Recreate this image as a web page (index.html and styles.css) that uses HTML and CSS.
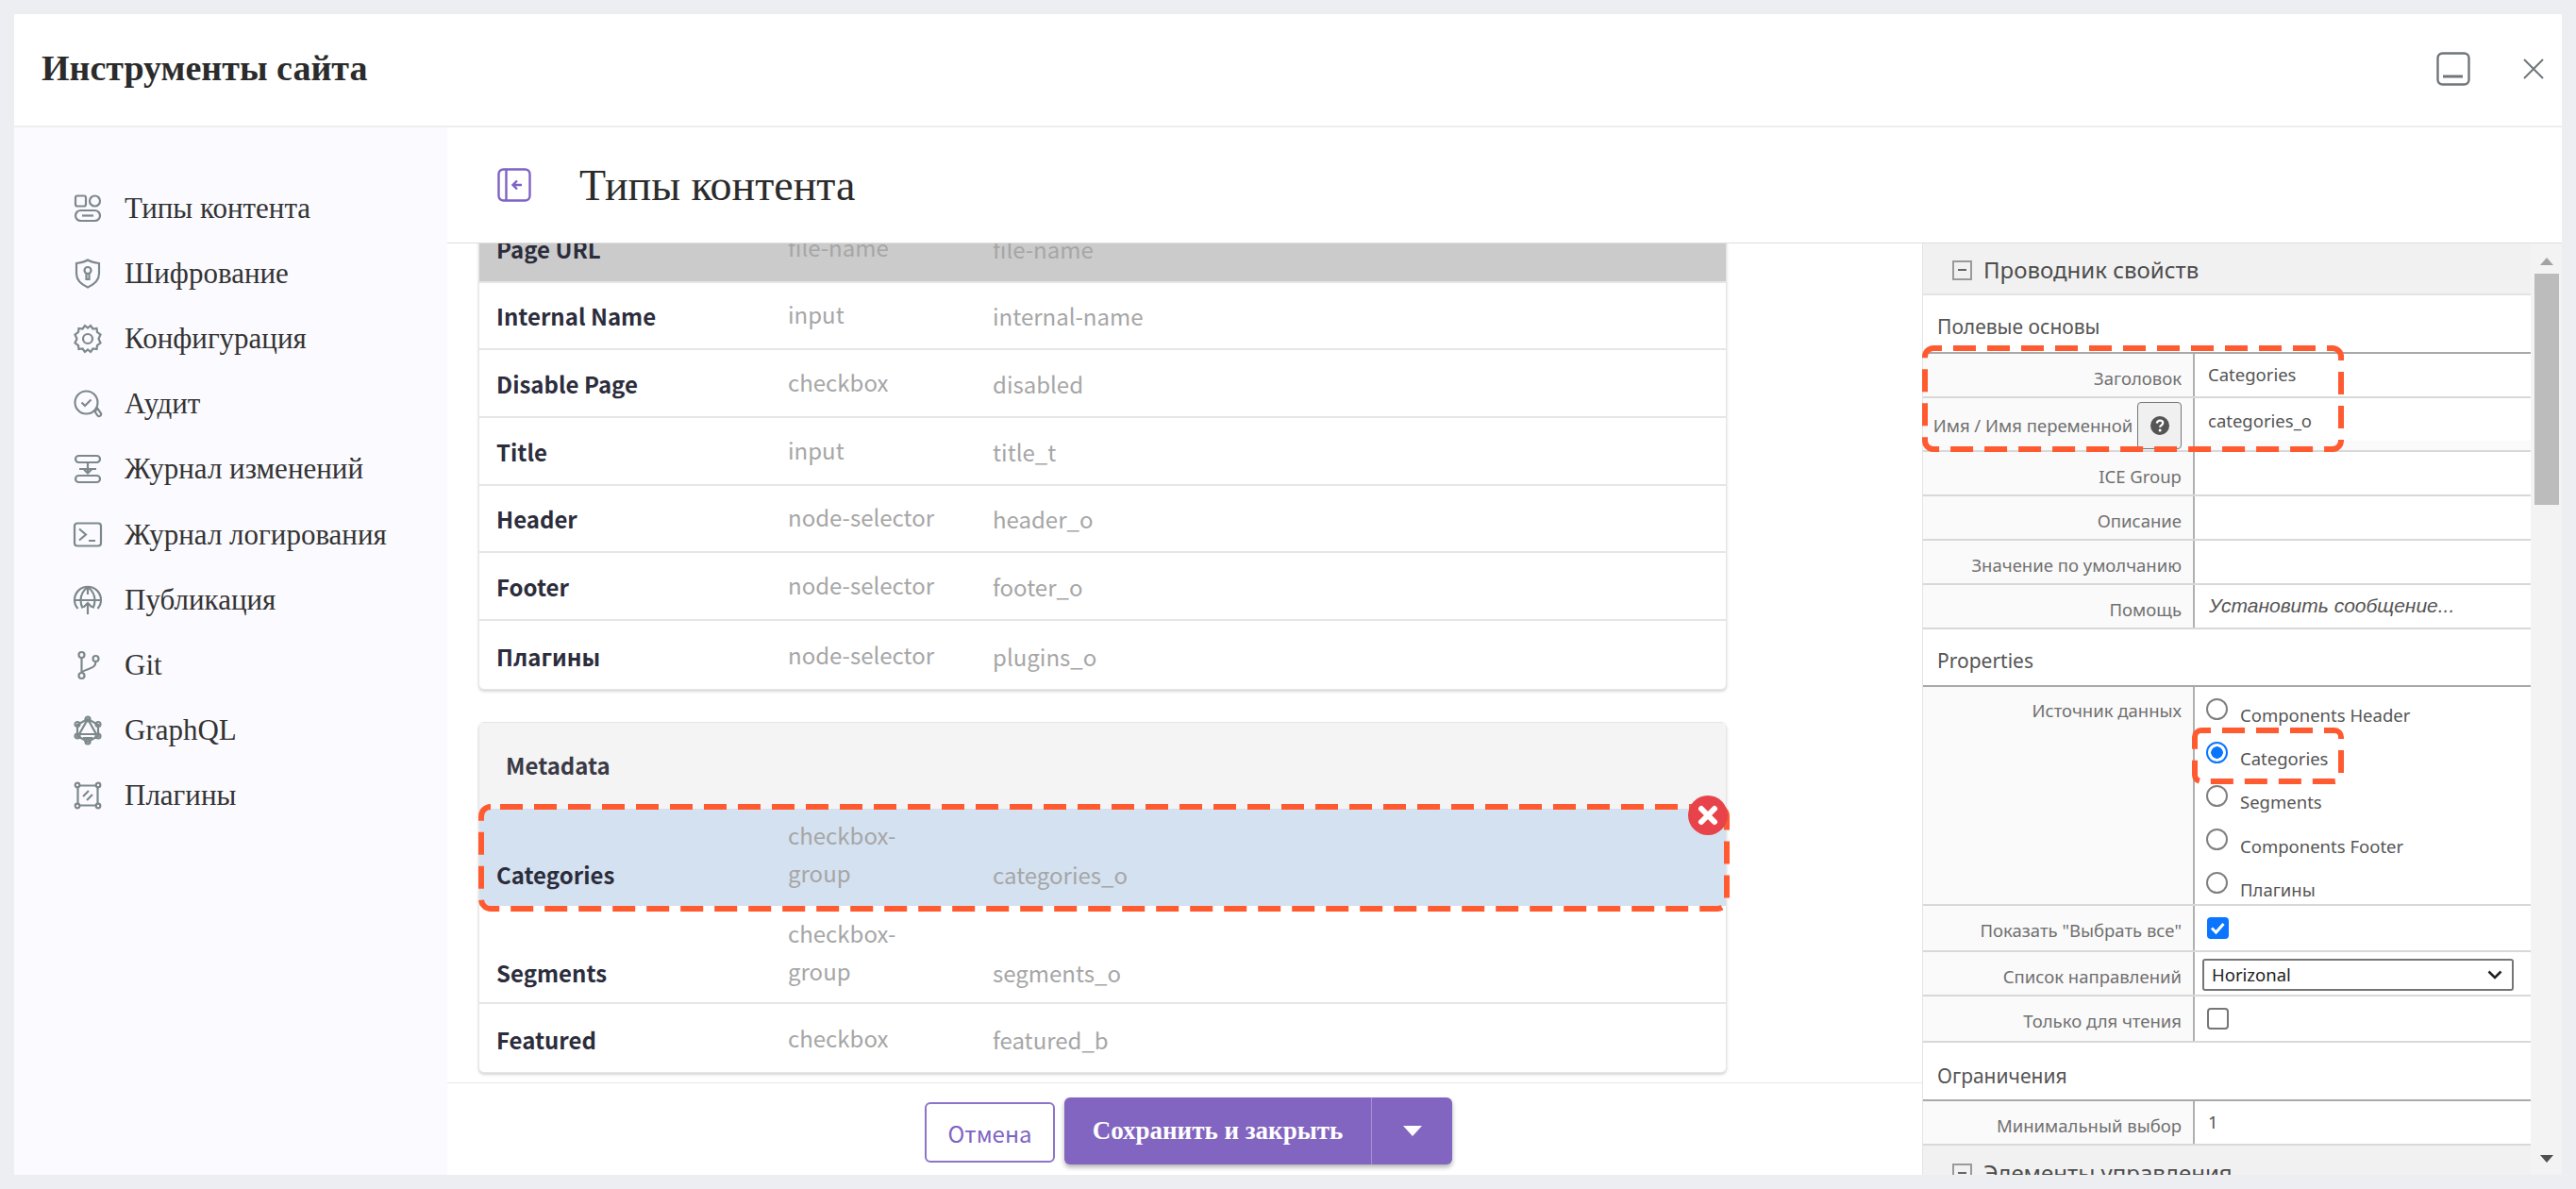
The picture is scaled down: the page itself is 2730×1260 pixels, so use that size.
FILE: index.html
```html
<!DOCTYPE html>
<html lang="ru">
<head>
  <meta charset="UTF-8">
  <title>Инструменты сайта</title>
  <link rel="stylesheet" href="styles.css">
</head>
<body>
  <div class="modal">
    <header class="modal-header">
      <h1>Инструменты сайта</h1>
      <div class="window-actions">
        <svg class="minimize-icon" width="36" height="36" viewBox="0 0 36 36" fill="none" stroke="#6f777b" stroke-width="2.4"><rect x="1.5" y="1.5" width="33" height="33" rx="5"/><path d="M7 26h21" stroke-width="3"/></svg>
        <svg class="close-icon" width="22" height="22" viewBox="0 0 22 22" fill="none" stroke="#6f777b" stroke-width="2"><path d="M1 1l20 20M21 1L1 21"/></svg>
      </div>
    </header>

    <div class="modal-body">
      <nav class="sidebar">
        <a class="nav-item"><svg width="32" height="32" viewBox="0 0 32 32"><rect x="3" y="2.5" width="11" height="11" rx="2"/><circle cx="23.5" cy="8" r="5.5"/><rect x="3" y="18" width="26" height="11" rx="5.5"/><path d="M10 23.500h12"/></svg>Типы контента</a>
        <a class="nav-item"><svg width="32" height="32" viewBox="0 0 32 32"><path d="M16 1.500c4 2.500 8 3 12 3.500v11c0 7-5.500 11.500-12 14.500C9.500 27.500 4 23 4 16V5c4-.5 8-1 12-3.500z"/><circle cx="16" cy="12.500" r="3.500"/><path d="M14.500 16v6h3v-6"/></svg>Шифрование</a>
        <a class="nav-item"><svg width="32" height="32" viewBox="0 0 32 32"><circle cx="16" cy="16" r="5"/><path d="M13 2l3 2.500L19 2l2.500 3.500 4-.5.5 4 3.500 2.500L27.500 16l2 4.500L26 23l-.5 4-4-.5L19 30l-3-2.500L13 30l-2.500-3.500-4 .5-.5-4-3.500-2.500 2-4.500-2-4.500L6 9l.5-4 4 .5z"/></svg>Конфигурация</a>
        <a class="nav-item"><svg width="32" height="32" viewBox="0 0 32 32"><circle cx="14.500" cy="14.500" r="12"/><path d="M9.500 14.500l3.500 3.500 6.500-6.500M23.500 24l3-3 3.500 5a2.200 2.200 0 0 1-3.500 2.500z"/></svg>Аудит</a>
        <a class="nav-item"><svg width="32" height="32" viewBox="0 0 32 32"><rect x="3" y="2" width="26" height="7" rx="3.500"/><rect x="3" y="23" width="26" height="7" rx="3.500"/><path d="M7 16h18M16 9v11M12 16.500l4 4 4-4"/></svg>Журнал изменений</a>
        <a class="nav-item"><svg width="32" height="32" viewBox="0 0 32 32"><rect x="2" y="3.500" width="28" height="24" rx="3"/><path d="M7 9.500l7 6-7 6M17 22h7"/></svg>Журнал логирования</a>
        <a class="nav-item"><svg width="32" height="32" viewBox="0 0 32 32"><path d="M5.500 25A14 14 0 1 1 26.500 25M16 2v8M2 16h28M16 2c-5 4-7.500 8.500-7.500 14 0 3 .8 6 2 8.500M16 2c5 4 7.500 8.500 7.500 14 0 3-.8 6-2 8.500M16 31V19M11.500 23.500L16 19l4.500 4.500"/></svg>Публикация</a>
        <a class="nav-item"><svg width="32" height="32" viewBox="0 0 32 32"><circle cx="9.500" cy="5" r="3"/><circle cx="9.500" cy="27" r="3"/><circle cx="24.500" cy="9" r="3"/><path d="M9.500 8v16M24.500 12c0 6-5 7-9 8.500-3 1-6 2-6 4"/></svg>Git</a>
        <a class="nav-item"><svg width="32" height="32" viewBox="0 0 32 32"><path d="M16 4l11 6v12l-11 6-11-6V10zM16 4L7 20h18zM11 24h10"/><circle cx="16" cy="4" r="2.500"/><circle cx="16" cy="28" r="2.500"/><circle cx="5" cy="9.500" r="2.500"/><circle cx="27" cy="9.500" r="2.500"/><circle cx="5" cy="22" r="2.500"/><circle cx="27" cy="22" r="2.500"/></svg>GraphQL</a>
        <a class="nav-item"><svg width="32" height="32" viewBox="0 0 32 32"><path d="M6 5.500h20M6 26.500h20M5.500 6v20M26.500 6v20M11 17l6-6M15 21l6-6"/><circle cx="5" cy="5" r="2.300"/><circle cx="27" cy="5" r="2.300"/><circle cx="5" cy="27" r="2.300"/><circle cx="27" cy="27" r="2.300"/></svg>Плагины</a>
      </nav>

      <div class="content">
        <div class="page-title">
          <svg width="36" height="36" viewBox="0 0 36 36" fill="none" stroke="#7e63c4" stroke-width="2.4"><rect x="1.500" y="1.500" width="33" height="33" rx="5"/><path d="M9.500 2v32M26 18H17M21 13.500L16.500 18l4.500 4.500"/></svg>
          <h2>Типы контента</h2>
        </div>

        <div class="workspace">
          <div class="main-col">
            <div class="scroller">
              <section class="card first-card">
                <div class="row row-grabbed"><span class="name">Page URL</span><span class="type">file-name</span><span class="var">file-name</span></div>
                <div class="row"><span class="name">Internal Name</span><span class="type">input</span><span class="var">internal-name</span></div>
                <div class="row"><span class="name">Disable Page</span><span class="type">checkbox</span><span class="var">disabled</span></div>
                <div class="row"><span class="name">Title</span><span class="type">input</span><span class="var">title_t</span></div>
                <div class="row"><span class="name">Header</span><span class="type">node-selector</span><span class="var">header_o</span></div>
                <div class="row"><span class="name">Footer</span><span class="type">node-selector</span><span class="var">footer_o</span></div>
                <div class="row"><span class="name">Плагины</span><span class="type">node-selector</span><span class="var">plugins_o</span></div>
              </section>

              <section class="card">
                <div class="card-title">Metadata</div>
                <div class="row row-tall row-selected">
                  <span class="name">Categories</span><span class="type type-wrap">checkbox-group</span><span class="var">categories_o</span>
                  <svg class="dash-box" width="1326" height="114" fill="none"><rect x="3" y="3" width="1320" height="108" rx="10" stroke="#ff5a30" stroke-width="6" stroke-dasharray="24 12" stroke-dashoffset="26"/></svg>
                  <svg class="remove-badge" width="42" height="42" viewBox="0 0 42 42"><circle cx="21" cy="21" r="21" fill="#e8434a"/><path d="M14 14l14 14M28 14L14 28" stroke="#fff" stroke-width="6" stroke-linecap="round"/></svg>
                </div>
                <div class="row row-tall"><span class="name">Segments</span><span class="type type-wrap">checkbox-group</span><span class="var">segments_o</span></div>
                <div class="row"><span class="name">Featured</span><span class="type">checkbox</span><span class="var">featured_b</span></div>
              </section>
            </div>

            <footer class="modal-footer">
              <button class="btn-cancel">Отмена</button>
              <div class="btn-save">
                <span class="save-label">Сохранить и закрыть</span>
                <span class="save-caret"><svg width="20" height="11" viewBox="0 0 20 11"><path d="M0 0h20L10 11z" fill="#fff"/></svg></span>
              </div>
            </footer>
          </div>

          <aside class="props">
            <div class="props-scroll">
              <div class="props-head"><span class="toggle"></span>Проводник свойств</div>

              <div class="group-title">Полевые основы</div>
              <div class="prop first-prop"><div class="prop-label">Заголовок</div><div class="prop-value value-up">Categories</div></div>
              <div class="prop prop-name">
                <div class="prop-label">Имя / Имя переменной <span class="help-btn"><svg width="20" height="20" viewBox="0 0 20 20"><circle cx="10" cy="10" r="10" fill="#555"/><path d="M6.800 7.500c.3-2 1.600-2.800 3.300-2.800 1.800 0 3.100 1 3.100 2.600 0 2.300-3.100 2.300-3.100 4.400" fill="none" stroke="#fff" stroke-width="2.300"/><circle cx="10.100" cy="15" r="1.500" fill="#fff"/></svg></span></div>
                <div class="prop-value value-up">categories_o</div>
              </div>
              <div class="prop"><div class="prop-label">ICE Group</div><div class="prop-value"></div></div>
              <div class="prop"><div class="prop-label">Описание</div><div class="prop-value"></div></div>
              <div class="prop"><div class="prop-label">Значение по умолчанию</div><div class="prop-value"></div></div>
              <div class="prop"><div class="prop-label">Помощь</div><div class="prop-value value-up value-hint">Установить сообщение...</div></div>

              <div class="group-title group-next">Properties</div>
              <div class="prop first-prop prop-radios">
                <div class="prop-label">Источник данных</div>
                <div class="prop-value radio-list">
                  <div class="radio-row"><span class="radio"></span>Components Header</div>
                  <div class="radio-row"><span class="radio radio-on"></span>Categories</div>
                  <div class="radio-row"><span class="radio"></span>Segments</div>
                  <div class="radio-row"><span class="radio"></span>Components Footer</div>
                  <div class="radio-row"><span class="radio"></span>Плагины</div>
                </div>
              </div>
              <div class="prop prop-check"><div class="prop-label">Показать "Выбрать все"</div><div class="prop-value"><span class="check check-on"><svg width="23" height="23" viewBox="0 0 23 23"><path d="M5 11.500l4.500 4.500 8-9" fill="none" stroke="#fff" stroke-width="3"/></svg></span></div></div>
              <div class="prop prop-select"><div class="prop-label">Список направлений</div><div class="prop-value"><div class="select">Horizonal<svg width="16" height="10" viewBox="0 0 16 10"><path d="M1.500 1.500L8 8l6.500-6.500" fill="none" stroke="#222" stroke-width="2.600"/></svg></div></div></div>
              <div class="prop prop-check"><div class="prop-label">Только для чтения</div><div class="prop-value"><span class="check"></span></div></div>

              <div class="group-title group-limit">Ограничения</div>
              <div class="prop first-prop"><div class="prop-label">Минимальный выбор</div><div class="prop-value value-up">1</div></div>

              <div class="props-head props-head-next"><span class="toggle"></span>Элементы управления</div>

              <svg class="dash-box dash-fields" width="447" height="113" fill="none"><rect x="3" y="3" width="441" height="107" rx="9" stroke="#ff5a30" stroke-width="6" stroke-dasharray="24 12" stroke-dashoffset="15"/></svg>
              <svg class="dash-box dash-radio" width="161" height="60" fill="none"><rect x="3" y="3" width="155" height="54" rx="7" stroke="#ff5a30" stroke-width="6" stroke-dasharray="24 12" stroke-dashoffset="14"/></svg>
            </div>
            <div class="scrollbar">
              <svg width="14" height="8" viewBox="0 0 14 8"><path d="M7 0l7 8H0z" fill="#a3a3a3"/></svg>
              <div class="scroll-thumb"></div>
              <svg class="scroll-down" width="14" height="8" viewBox="0 0 14 8"><path d="M0 0h14L7 8z" fill="#505050"/></svg>
            </div>
          </aside>
        </div>
      </div>
    </div>
  </div>
</body>
</html>
```

FILE: styles.css
```css
html, body {
  height: 100%;
}

body {
  margin: 0;
  padding: 15px;
  box-sizing: border-box;
  background-color: #eceef2;
  font-family: "Noto Sans CJK SC", "Noto Sans", sans-serif;
  overflow: hidden;
}

.modal {
  height: 1230px;
  background-color: #fff;
  display: flex;
  flex-direction: column;
}

/* Header */
.modal-header {
  height: 120px;
  flex: none;
  box-sizing: border-box;
  border-bottom: 2px solid #eeeeee;
  display: flex;
  align-items: center;
  justify-content: space-between;
  padding: 0 19px 3px 29px;
}

h1 {
  margin: 0 0 2px;
  font-family: "Liberation Serif", serif;
  font-size: 38px;
  font-weight: bold;
  color: #2b2b2b;
}

.window-actions {
  display: flex;
  align-items: center;
  gap: 56px;
}

/* Body */
.modal-body {
  flex: 1;
  display: flex;
  min-height: 0;
}

.sidebar {
  width: 459px;
  flex: none;
  background-color: #fbfbff;
  padding: 51px 0 0 62px;
  box-sizing: border-box;
}

.nav-item {
  display: flex;
  align-items: center;
  gap: 23px;
  height: 69.2px;
  font-family: "Liberation Serif", serif;
  font-size: 31px;
  color: #333;
}

.nav-item svg {
  flex: none;
  fill: none;
  stroke: #7d888d;
  stroke-width: 2.200;
}

.content {
  flex: 1;
  display: flex;
  flex-direction: column;
  min-width: 0;
}

.page-title {
  height: 122px;
  flex: none;
  border-bottom: 1px solid #dedede;
  display: flex;
  align-items: center;
  gap: 51px;
  padding-left: 53px;
  box-sizing: content-box;
}

h2 {
  margin: 0;
  font-family: "Liberation Serif", serif;
  font-size: 46px;
  font-weight: normal;
  color: #2b2b2b;
}

.workspace {
  flex: 1;
  display: flex;
  min-height: 0;
}

.main-col {
  width: 1563px;
  flex: none;
  display: flex;
  flex-direction: column;
}

.scroller {
  flex: 1;
  overflow: hidden;
  padding: 0 33px;
  min-height: 0;
}

/* Field cards */
.card {
  width: 1323px;
  box-sizing: border-box;
  border: 1px solid #e6e6e6;
  border-radius: 6px;
  box-shadow: 0 2px 3px rgba(0, 0, 0, 0.16);
  background-color: #fff;
  margin-bottom: 34px;
}

.first-card {
  margin-top: -31px;
}

.card-title {
  height: 91px;
  background-color: #f4f4f4;
  font-size: 24px;
  font-weight: bold;
  color: #3a3a46;
  padding: 25px 0 0 28px;
  box-sizing: border-box;
  line-height: 40px;
}

.row {
  position: relative;
  height: 71.7px;
  box-sizing: border-box;
  border-bottom: 2px solid #e6e6e6;
  display: grid;
  grid-template-columns: 309px 217px 1fr;
  padding: 0 0 14px 18px;
  align-items: end;
  font-size: 24px;
  line-height: 40px;
}

.row:last-child {
  border-bottom: none;
}

.row-grabbed {
  background-color: #cbcbcb;
}

.row-tall {
  height: 104px;
  padding-bottom: 11px;
}

.row-selected {
  height: 103px;
  padding-bottom: 13px;
  background-color: #d4e1f0;
  border-bottom: none;
}

.name {
  font-weight: bold;
  color: #2c2d3c;
}

.type,
.var {
  color: #a6a6a6;
}

.type {
  padding-bottom: 2px;
}

.type-wrap {
  width: 110px;
}

/* Overlays for the callouts */
.dash-box {
  position: absolute;
  pointer-events: none;
}

.row-selected .dash-box {
  left: -1px;
  top: -5px;
}

.remove-badge {
  position: absolute;
  right: -2px;
  top: -14px;
}

/* Footer */
.modal-footer {
  height: 98px;
  flex: none;
  box-sizing: border-box;
  border-top: 1px solid #e6e6e6;
  display: flex;
  justify-content: center;
  align-items: center;
  gap: 10px;
  padding: 4px 0 0 8px;
  position: relative;
  background-color: #fff;
}

.btn-cancel {
  width: 138px;
  height: 64px;
  margin-top: 3px;
  background-color: #fff;
  border: 2px solid #8d74c9;
  border-radius: 6px;
  color: #7e63c4;
  font-family: inherit;
  font-size: 24px;
}

.btn-save {
  width: 411px;
  height: 71px;
  background-color: #8165c0;
  border-radius: 6px;
  box-shadow: 0 3px 5px rgba(0, 0, 0, 0.3);
  display: flex;
  align-items: center;
  color: #fff;
  font-family: "Liberation Serif", serif;
  font-size: 27px;
  font-weight: bold;
}

.save-label {
  width: 325px;
  height: 100%;
  display: flex;
  align-items: center;
  justify-content: center;
  border-right: 1px solid #a391d3;
}

.save-caret {
  flex: 1;
  display: flex;
  justify-content: center;
}

/* Property explorer */
.props {
  flex: 1;
  display: flex;
  min-width: 0;
  overflow: hidden;
}

.props-scroll {
  position: relative;
  width: 645px;
  flex: none;
  border-left: 1px solid #e4e4e4;
  box-sizing: border-box;
  font-family: "Noto Sans", sans-serif;
  font-size: 18.500px;
  line-height: 28px;
  color: #707070;
}

.props-head {
  height: 55px;
  background-color: #f1f1f1;
  border-bottom: 2px solid #e4e4e4;
  box-sizing: border-box;
  display: flex;
  align-items: center;
  gap: 12px;
  padding: 3px 0 0 31px;
  font-size: 24px;
  color: #4c4c4c;
}

.props-head-next {
  border-bottom: none;
}

.toggle {
  width: 21px;
  height: 21px;
  box-sizing: border-box;
  border: 2px solid #9a9a9a;
  background: linear-gradient(#666, #666) center / 9px 2px no-repeat;
}

.group-title {
  height: 62px;
  box-sizing: border-box;
  padding: 19px 0 0 15px;
  font-size: 21px;
  color: #555;
  border-bottom: 2px solid #a9a9a9;
}

.group-next {
  height: 61px;
  padding-top: 19px;
}

.group-limit {
  height: 62px;
  padding-top: 21px;
}

.prop {
  display: flex;
  height: 47px;
  box-sizing: border-box;
  border-bottom: 2px solid #d8d8d8;
}

.prop-name {
  height: 57px;
}

.prop-radios {
  height: 232px;
}

.prop-check {
  height: 49px;
}

.prop-select {
  height: 47px;
}

.prop-label {
  width: 288px;
  flex: none;
  box-sizing: border-box;
  background-color: #fafafa;
  border-right: 2px solid #b0b0b0;
  padding: 12px 12px 0 0;
  text-align: right;
  white-space: nowrap;
}

.prop-name .prop-label {
  padding-top: 15px;
}

.prop-radios .prop-label {
  padding-top: 11px;
}

.prop-value {
  flex: 1;
  color: #555;
  padding-left: 14px;
}

.value-up {
  padding-top: 8px;
}

.prop-name .prop-value {
  padding-top: 10px;
  background: linear-gradient(#fff 0 45px, #fafafa 45px);
}

.value-hint {
  font-family: "Liberation Sans", sans-serif;
  font-size: 21px;
  font-style: italic;
  padding-left: 15px;
}

.help-btn {
  display: inline-flex;
  width: 47px;
  height: 50px;
  box-sizing: border-box;
  margin-top: -11px;
  align-items: center;
  justify-content: center;
  vertical-align: top;
  background-color: #f0f0f0;
  border: 1px solid #777;
  border-radius: 4px;
}

.radio-list {
  padding: 8px 0 0 11.500px;
}

.radio-row {
  height: 46.2px;
  display: flex;
  gap: 13.500px;
  line-height: 44px;
}

.radio {
  width: 23px;
  height: 23px;
  margin-top: 3.500px;
  flex: none;
  box-sizing: border-box;
  border: 2px solid #808080;
  border-radius: 50%;
  background-color: #fff;
}

.radio-on {
  border: 2px solid #0a75ff;
  background: radial-gradient(circle, #0a75ff 0 6px, #fff 6.500px);
}

.prop-check .prop-value {
  padding: 12px 0 0 13px;
}

.check {
  display: block;
  width: 23px;
  height: 23px;
  box-sizing: border-box;
  border: 2px solid #767676;
  border-radius: 4px;
  background-color: #fff;
}

.check-on {
  border: none;
  background-color: #0a75ff;
}

.prop-select .prop-value {
  padding: 7px 0 0 8px;
}

.select {
  width: 330px;
  height: 34px;
  box-sizing: border-box;
  border: 2px solid #767676;
  border-radius: 3px;
  display: flex;
  align-items: center;
  justify-content: space-between;
  padding: 0 10px 0 8px;
  color: #222;
}

.dash-fields {
  left: -1px;
  top: 108px;
}

.dash-radio {
  left: 285px;
  top: 513px;
}

.scrollbar {
  flex: 1;
  display: flex;
  flex-direction: column;
  align-items: center;
  background-color: #f3f3f3;
  padding-top: 15px;
}

.scroll-thumb {
  width: 26px;
  height: 245px;
  margin-top: 9px;
  background-color: #bcbcbc;
}

.scroll-down {
  margin-top: auto;
  margin-bottom: 13px;
}
```
